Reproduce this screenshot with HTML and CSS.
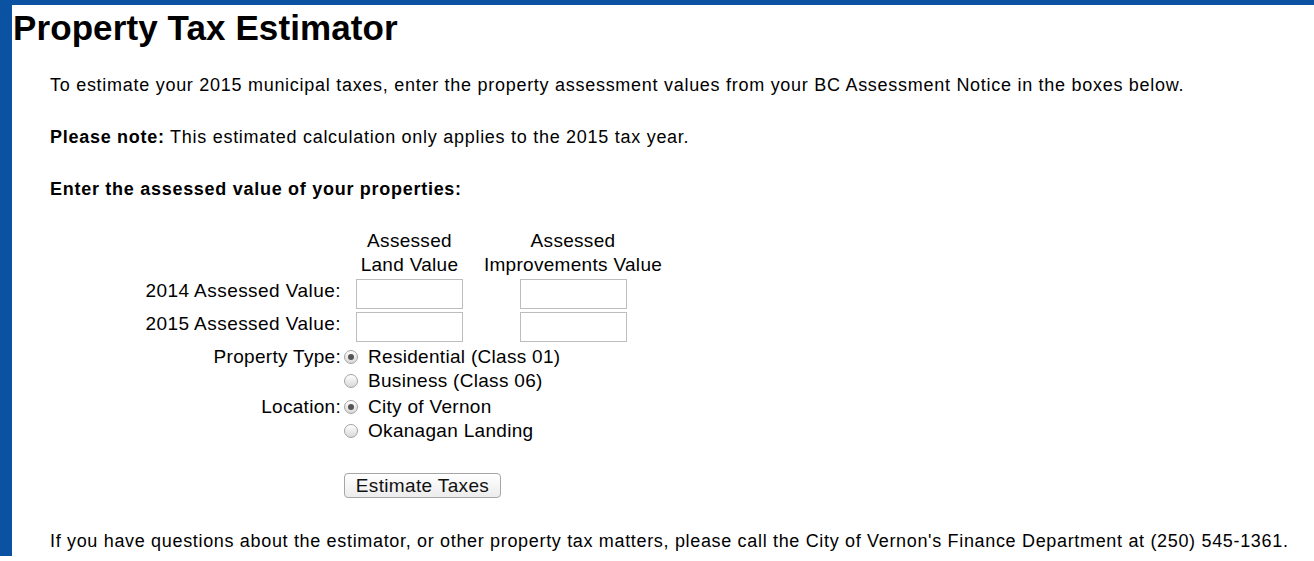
FILE: index.html
```html
<!DOCTYPE html>
<html>
<head>
<meta charset="utf-8">
<title>Property Tax Estimator</title>
<link rel="stylesheet" href="styles.css">
</head>
<body>
<div class="frame">
  <h1 class="title">Property Tax Estimator</h1>
  <div class="content">
    <p class="para">To estimate your 2015 municipal taxes, enter the property assessment values from your BC Assessment Notice in the boxes below.</p>
    <p class="para"><b>Please note:</b> This estimated calculation only applies to the 2015 tax year.</p>
    <p class="para"><b>Enter the assessed value of your properties:</b></p>
    <form class="form">
      <div class="grid">
        <div></div>
        <div class="colhead">Assessed<br>Land Value</div>
        <div class="colhead">Assessed<br>Improvements Value</div>

        <div class="lbl row-in">2014 Assessed Value:</div>
        <div class="cell row-in"><input class="box" type="text"></div>
        <div class="cell row-in"><input class="box" type="text"></div>

        <div class="lbl row-in">2015 Assessed Value:</div>
        <div class="cell row-in"><input class="box" type="text"></div>
        <div class="cell row-in"><input class="box" type="text"></div>

        <div class="lbl lbl-radio first">Property Type:</div>
        <div class="radios first">
          <label class="opt"><input class="rad" type="radio" name="ptype" checked><span>Residential (Class 01)</span></label>
          <label class="opt"><input class="rad" type="radio" name="ptype"><span>Business (Class 06)</span></label>
        </div>

        <div class="lbl lbl-radio loc">Location:</div>
        <div class="radios loc">
          <label class="opt"><input class="rad" type="radio" name="loc" checked><span>City of Vernon</span></label>
          <label class="opt"><input class="rad" type="radio" name="loc"><span>Okanagan Landing</span></label>
        </div>

        <div></div>
        <div class="btnrow"><button class="btn" type="button">Estimate Taxes</button></div>
      </div>
    </form>
    <p class="para foot">If you have questions about the estimator, or other property tax matters, please call the City of Vernon's Finance Department at (250) 545-1361.</p>
  </div>
</div>
</body>
</html>
```
FILE: styles.css
```css
html, body {
  margin: 0;
  padding: 0;
  background: #ffffff;
}
body {
  font-family: "Liberation Sans", Arial, Helvetica, sans-serif;
  color: #000;
  overflow: hidden;
}
.frame {
  border-left: 12px solid #0b52a3;
  border-top: 5px solid #0b52a3;
  min-height: 556px;
  box-sizing: border-box;
  padding-left: 1px;
}
.title {
  font-size: 35px;
  font-weight: bold;
  letter-spacing: 0.1px;
  margin: 0;
  padding-top: 3px;
  line-height: 40px;
}
.content {
  padding-left: 37px;
}
.para {
  font-size: 18px;
  letter-spacing: 0.72px;
  line-height: 20px;
  margin: 0;
  padding-top: 32px;
}
.para:first-child {
  padding-top: 27px;
}
.form {
  margin-top: 30px;
  font-size: 19px;
  letter-spacing: 0.3px;
}
.grid {
  display: grid;
  grid-template-columns: 294px 131px 196px;
}
.colhead {
  text-align: center;
  line-height: 24px;
}
.lbl {
  text-align: right;
  padding-right: 3px;
}
.row-in {
  height: 33px;
  display: flex;
  align-items: center;
}
.lbl.row-in {
  justify-content: flex-end;
  box-sizing: border-box;
  padding-bottom: 6px;
  letter-spacing: 0.45px;
}
.cell {
  justify-content: center;
}
.box {
  width: 107px;
  height: 30px;
  box-sizing: border-box;
  border: 1px solid #bdbdbd;
  margin: 0;
  padding: 2px;
  font: inherit;
}
.lbl-radio {
  line-height: 24px;
}
.radios {
  grid-column: 2 / 4;
  display: flex;
  flex-direction: column;
}
.radios.first, .lbl-radio.first {
  margin-top: 2px;
}
.radios.loc, .lbl-radio.loc {
  margin-top: 2px;
}
.opt {
  display: flex;
  align-items: center;
  height: 24px;
  line-height: 24px;
}
.rad {
  appearance: none;
  -webkit-appearance: none;
  width: 14px;
  height: 14px;
  margin: 0 10px 0 0;
  border-radius: 50%;
  border: 1px solid #a4a4a4;
  background: linear-gradient(#ffffff, #d8d8d8);
  box-sizing: border-box;
  position: relative;
  flex: none;
}
.rad:checked::after {
  content: "";
  position: absolute;
  left: 3px;
  top: 3px;
  width: 6px;
  height: 6px;
  border-radius: 50%;
  background: #555555;
}
.btnrow {
  grid-column: 2 / 4;
  padding-top: 30px;
}
.btn {
  font: inherit;
  font-size: 19px;
  letter-spacing: 0.35px;
  height: 25px;
  width: 157px;
  padding: 0;
  line-height: 22px;
  border: 1px solid #a6a6a6;
  border-radius: 4px;
  background: linear-gradient(#ffffff, #ececec);
  color: #111;
}
.foot {
  padding-top: 33px;
  letter-spacing: 0.67px;
}
```
